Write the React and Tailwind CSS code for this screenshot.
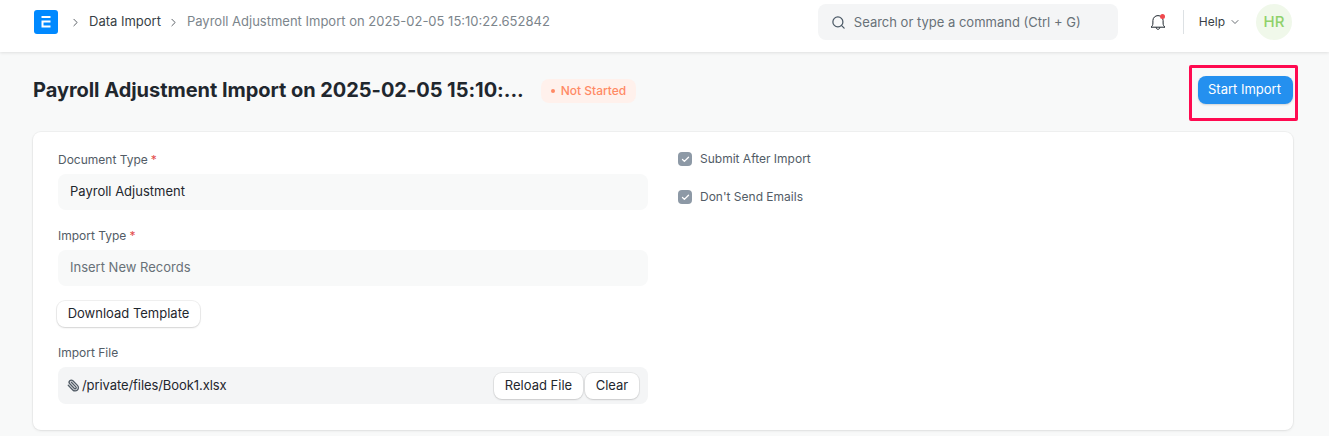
import { Search, ChevronDown, ChevronRight, Paperclip, Check } from "lucide-react";

const whiteBtn = "h-[26px] px-2.5 bg-white rounded-lg text-[13px] text-[#1f272e] shadow-[0_0_0_1px_rgba(0,0,0,0.06),0_1px_2px_rgba(0,0,0,0.12)]";

function Logo() {
  return (
    <svg width="24" height="24" viewBox="0 0 24 24" className="block">
      <rect width="24" height="24" rx="3" fill="#0089ff" />
      <path d="M7.5 6h9v2h-9zM7.5 10.5h9v2h-7v3h7v2h-9z" fill="#fff" />
    </svg>
  );
}

function BellIcon() {
  return (
    <svg width="18" height="18" viewBox="0 0 18 18" fill="none" stroke="#1f272e" strokeWidth="1" className="block">
      <path d="M2 14.2c1.3-1 1.9-2.2 1.9-4.2V7.6C3.9 4.8 6.1 2.6 9 2.6s5.1 2.2 5.1 5V10c0 2 .6 3.2 1.9 4.2z" />
      <path d="M7.2 14.4c0 1.1.8 1.9 1.8 1.9s1.8-.8 1.8-1.9" />
    </svg>
  );
}

function Field({ label, required, value, muted, className }) {
  return (
    <div className={className}>
      <div className="h-[15px] mb-[7px] flex items-center text-[12px] leading-[15px] text-[#525c66]">
        {label}
        {required && <span className="ml-[3px] text-[#e24c4c]">*</span>}
      </div>
      <div className={"h-9 px-3 flex items-center rounded-lg bg-[#f8f9f9] text-[13px] " + (muted ? "text-[#687178]" : "text-[#1f272e]")}>
        {value}
      </div>
    </div>
  );
}

function CheckRow({ label }) {
  return (
    <div className="h-[14px] mb-6 flex items-center gap-2 text-[12px] text-[#525c66]">
      <span className="w-3.5 h-3.5 rounded-[4px] bg-[#8d99a6] flex items-center justify-center">
        <Check size={9} strokeWidth={3.5} className="text-white" />
      </span>
      {label}
    </div>
  );
}

export default function App() {
  return (
    <div className="relative w-[1329px] h-[436px] overflow-hidden bg-[#f8f9f9] font-['Inter',sans-serif]">
      <header className="h-[52px] bg-white shadow-[0_1px_3px_rgba(0,0,0,0.1)] flex items-center pl-[34px] pr-[37px]">
        <div className="mb-[8px]"><Logo /></div>
        <ChevronRight size={13} strokeWidth={1.5} className="ml-[11px] mb-[8px] text-[#383f46]" />
        <span className="ml-[7px] mb-[8px] text-[13px] text-[#383f46]">Data Import</span>
        <ChevronRight size={13} strokeWidth={1.5} className="ml-[6px] mb-[8px] text-[#383f46]" />
        <span className="ml-[7px] mb-[8px] text-[13px] text-[#7c858c]">Payroll Adjustment Import on 2025-02-05 15:10:22.652842</span>
        <div className="ml-auto mb-[8px] w-[300px] h-9 pt-px rounded-lg bg-[#f4f5f6] flex items-center pl-[13px] text-[13px] text-[#687178] gap-2">
          <Search size={15} className="text-[#4c5a67]" />
          Search or type a command (Ctrl + G)
        </div>
        <div className="relative ml-[31px] mb-[8px]">
          <BellIcon />
          <span className="absolute top-px right-[2px] w-[5px] h-[5px] rounded-full bg-[#f0484d]" />
        </div>
        <div className="ml-[16px] mb-[8px] w-px h-6 bg-[#dde1e4]" />
        <span className="ml-[15px] mb-[8px] text-[12px] text-[#383f46]">Help</span>
        <ChevronDown size={12} strokeWidth={1.5} className="ml-[4px] mb-[8px] text-[#383f46]" />
        <div className="ml-[15px] mb-[8px] w-9 h-9 rounded-full bg-[#f0f8ea] flex items-center justify-center text-[15px] font-medium text-[#8fd16a]">HR</div>
      </header>

      <main className="pl-[33px] pr-[36px]">
        <div className="h-[80px] flex items-center justify-between">
          <div className="flex items-center">
            <h1 className="-mt-[4px] text-[20px] font-bold tracking-[-0.04px] text-[#1f272e]">Payroll Adjustment Import on 2025-02-05 15:10:...</h1>
            <span className="ml-[17px] -mt-[2px] h-6 px-2.5 rounded-lg bg-[#fff1ec] flex items-center gap-1.5 text-[12px] font-medium text-[#ff8a65]">
              <span className="w-1 h-1 rounded-full bg-[#ff8a65]" />
              Not Started
            </span>
          </div>
          <button className="-mt-[4px] w-[95px] h-[28px] pr-[2px] rounded-lg bg-[#2490ef] text-white text-[13px] shadow-[0_1px_2px_rgba(0,0,0,0.15)]">Start Import</button>
        </div>

        <section className="h-[298px] bg-white rounded-lg shadow-[0_0_0_1px_rgba(0,0,0,0.03),0_1px_3px_rgba(0,0,0,0.08)] px-[25px] pt-[20px] flex gap-[30px]">
          <div className="w-[590px]">
            <Field className="mb-[18px]" label="Document Type" required value="Payroll Adjustment" />
            <Field className="mb-[15px]" label="Import Type" required value="Insert New Records" muted />
            <button className={whiteBtn + " block w-[143px] -ml-px"}>Download Template</button>
            <div className="mt-[18px] mb-[7px] h-[15px] flex items-center text-[12px] text-[#525c66]">Import File</div>
            <div className="h-[37px] rounded-lg bg-[#f4f5f6] flex items-center pl-[9px] pr-[9px] text-[13px] text-[#1f272e]">
              <Paperclip size={13} strokeWidth={2.5} className="text-[#525c66] -scale-x-100" />
              <span className="ml-[2px] tracking-[-0.08px]">/private/files/Book1.xlsx</span>
              <button className={whiteBtn + " ml-auto w-[89px]"}>Reload File</button>
              <button className={whiteBtn + " ml-[2px] w-[54px]"}>Clear</button>
            </div>
          </div>
          <div>
            <CheckRow label="Submit After Import" />
            <CheckRow label="Don't Send Emails" />
          </div>
        </section>
      </main>

      {/* red box drawn on the screenshot */}
      <div className="absolute left-[1189px] top-[65px] w-[109px] h-[56px] border-[3px] border-[#ff0a50] rounded-[2px]" />
    </div>
  );
}
